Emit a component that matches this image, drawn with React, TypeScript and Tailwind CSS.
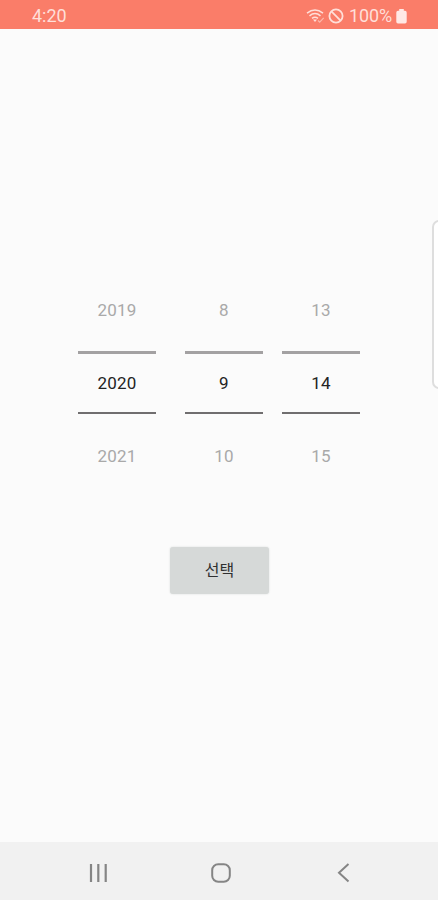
import React from "react";

type PickerProps = { values: [string, string, string]; className?: string };

function Picker({ values, className = "" }: PickerProps) {
  const [previous, current, next] = values;
  return (
    <div className={`flex w-[78px] flex-col text-center text-[17px] leading-5 tracking-[0.2px] ${className}`}>
      <div className="h-[51px] text-[#a9a9a9]">{previous}</div>
      <div className="flex h-[63px] items-center justify-center border-t-[3px] border-b-2 border-t-[#a3a1a2] border-b-[#706e6f] text-[#242424]">
        {current}
      </div>
      <div className="pt-8 text-[#a9a9a9]">{next}</div>
    </div>
  );
}

function StatusBar() {
  return (
    <header className="flex h-[29px] shrink-0 items-center bg-[#fa7d69] pr-[31px] pl-8 pt-[3px] text-[#ffdfd9]">
      <span className="text-[18px] leading-5">4:20</span>
      <svg className="ml-auto" width="20" height="16" viewBox="0 0 20 16" fill="none" stroke="currentColor">
        <path d="M1 5.1Q9 -1.2 17 5.1M3.5 7.8Q9 3.3 14.5 7.8M6 10.4Q9 8 12 10.4" strokeWidth="1.5" />
        <path d="M7 11.5h4L9 14z" fill="currentColor" stroke="none" />
        <path d="m12 12.5 1.700 1.600 4-4.200" strokeWidth="1.200" opacity=".6" />
      </svg>
      <svg className="ml-[2px]" width="16" height="16" viewBox="0 0 16 16" fill="none" stroke="currentColor" strokeWidth="1.8">
        <circle cx="8" cy="8" r="6.6" />
        <path d="m3.4 3.4 9.2 9.2" />
      </svg>
      <span className="ml-[5px] w-[44px] text-[18px] leading-5 tracking-[-0.1px]">100%</span>
      <svg className="ml-[3px]" width="11" height="15" viewBox="0 0 11 15" fill="#ffe9e5">
        <path d="M3.2 0h4.6v1.7H9q1.7 0 1.7 1.7v9.4q0 1.7-1.7 1.7H2Q.3 14.500.3 12.800V3.400Q.3 1.700 2 1.700h1.200z" />
      </svg>
    </header>
  );
}

function NavigationBar() {
  return (
    <nav className="flex h-[58px] shrink-0 items-center bg-[#f1f1f1] pt-[3px] pl-[88px] text-[#858585]">
      <svg width="20" height="20" viewBox="0 0 20 20" fill="none" stroke="currentColor" strokeWidth="2.200">
        <path d="M3 1v18M10.300 1v18M17.700 1v18" />
      </svg>
      <svg className="ml-[103px]" width="20" height="20" viewBox="0 0 20 20" fill="none" stroke="currentColor" strokeWidth="2">
        <rect x="1.200" y="1.200" width="17.600" height="17.600" rx="6" />
      </svg>
      <svg className="ml-[106px]" width="13" height="20" viewBox="0 0 13 20" fill="none" stroke="currentColor" strokeWidth="2">
        <path d="M11.500 1 2 9.800l9.500 8.800" />
      </svg>
    </nav>
  );
}

export default function App() {
  return (
    <div className="relative flex h-[900px] w-[438px] flex-col overflow-hidden bg-[#fbfbfb] font-['Roboto','Noto_Sans_CJK_KR',sans-serif]">
      <StatusBar />
      <main className="flex flex-1 flex-col pt-[271px]">
        <div className="flex pl-[78px]">
          <Picker values={["2019", "2020", "2021"]} />
          <Picker values={["8", "9", "10"]} className="ml-[29px]" />
          <Picker values={["13", "14", "15"]} className="ml-[19px]" />
        </div>
        <button className="mt-[81px] ml-[170px] h-[47px] w-[99px] rounded-[3px] bg-[#d6d9d8] text-[16px] leading-5 text-[#303030] shadow-[0_0_2px_#d6d9d8]">
          선택
        </button>
      </main>
      <NavigationBar />
      <aside className="absolute top-[220px] left-[432px] h-[169px] w-[20px] rounded-[7px] border-2 border-[#dedede] bg-white" />
    </div>
  );
}
